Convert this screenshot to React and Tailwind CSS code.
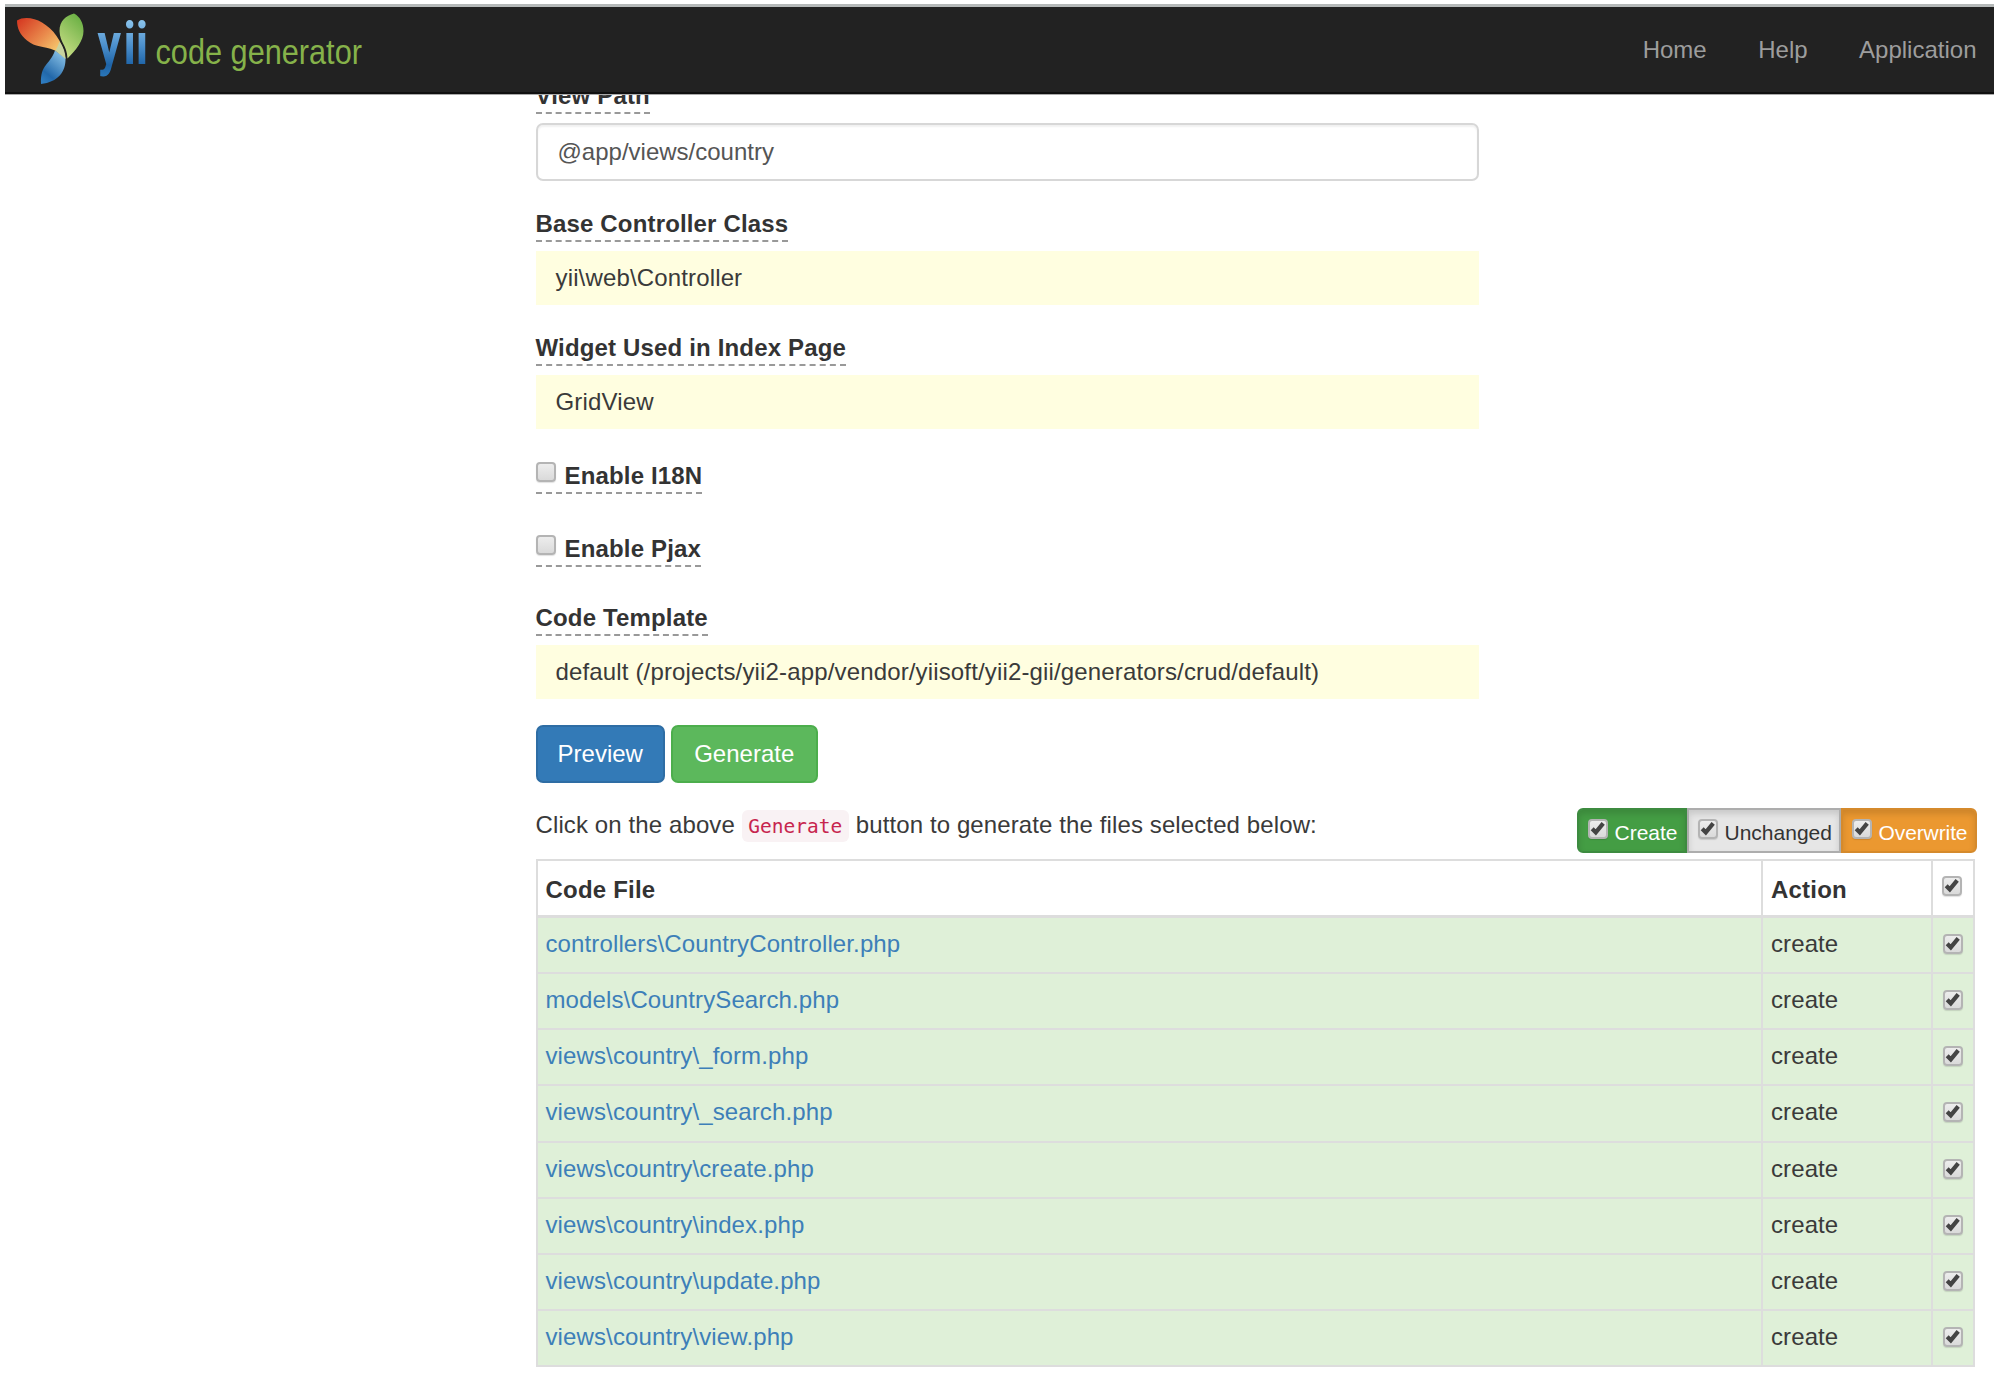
import React from "react";

const files = [
  "controllers\\CountryController.php",
  "models\\CountrySearch.php",
  "views\\country\\_form.php",
  "views\\country\\_search.php",
  "views\\country\\create.php",
  "views\\country\\index.php",
  "views\\country\\update.php",
  "views\\country\\view.php",
];

function Checkbox({ checked, className = "" }) {
  return (
    <span
      role="checkbox"
      aria-checked={!!checked}
      className={
        "inline-block h-5 w-5 shrink-0 rounded-[4px] border-2 border-[#b4b4b4] bg-linear-to-b from-[#ededed] to-[#dadada] shadow-[0_1px_1px_rgba(0,0,0,0.12)] " +
        className
      }
    >
      {checked && (
        <svg viewBox="0 0 16 16" className="block h-4 w-4" fill="none" stroke="#444" strokeWidth="4.2">
          <path d="M2.200 7.800 5.800 11.400 13.200 2.400" />
        </svg>
      )}
    </span>
  );
}

function Label({ children, className = "" }) {
  return (
    <div className={"flex h-8 " + className}>
      <span className="flex h-8 border-b-2 border-dashed border-[#999] font-bold leading-7 tracking-[0.16px] whitespace-pre">{children}</span>
    </div>
  );
}

function Sticky({ children }) {
  return (
    <div className="mt-[9px] h-[54px] w-[943px] bg-[#fffee0] pl-5 leading-[54px] tracking-[0.150px] text-[#3a3a3a]">{children}</div>
  );
}

function Logo() {
  return (
    <svg viewBox="0 0 380 85" className="h-[85px] w-[380px] overflow-visible">
      <defs>
        <linearGradient id="red" x1="0" y1="0.1" x2="1" y2="0.9">
          <stop offset="0" stopColor="#d63a22" />
          <stop offset="0.5" stopColor="#e98a4c" />
          <stop offset="1" stopColor="#fbe37c" />
        </linearGradient>
        <linearGradient id="green" x1="0.7" y1="0" x2="0.2" y2="1">
          <stop offset="0" stopColor="#6bb044" />
          <stop offset="1" stopColor="#cfe08a" />
        </linearGradient>
        <linearGradient id="blue" x1="0.8" y1="0" x2="0.2" y2="1">
          <stop offset="0" stopColor="#8cc4e8" />
          <stop offset="0.75" stopColor="#2268aa" />
          <stop offset="1" stopColor="#2e7cc0" />
        </linearGradient>
        <linearGradient id="word" gradientUnits="userSpaceOnUse" x1="0" y1="-42" x2="0" y2="12">
          <stop offset="0" stopColor="#86c0ea" />
          <stop offset="0.45" stopColor="#4a8ecb" />
          <stop offset="0.8" stopColor="#1e64a8" />
          <stop offset="1" stopColor="#2a76b8" />
        </linearGradient>
      </defs>
      <path d="M12 13.500C18 9.500 29 10.500 37 15.500C48 22 57 33 60.500 51L50 43.500C37 38 31 41 22 33.500C15 28 12 21 12 13.500Z" fill="url(#red)" />
      <path d="M69 6.500C75 9.500 78.500 16 78.500 24C78.500 34 71 43 62.500 51.500C62 38 55 36 54.500 24C54.500 14 61 8.500 69 6.500Z" fill="url(#green)" />
      <path d="M50 43.500L60.500 51C61 65 53 75 36 77C35 57 45 58 50 43.500Z" fill="url(#blue)" />
      <path d="M54.500 34.500C58.500 40 60.500 46 60.500 52C57 49 53 46 50.500 43.500C52.500 40 53.500 37 54.500 34.500Z" fill="#c8d3a0" />
      <text transform="translate(92.500 57) scale(0.79 1)" x="0 33 48.500" fill="url(#word)" fontFamily="Roboto, sans-serif" fontWeight="700" fontSize="59">
        yii
      </text>
      <text transform="translate(150.500 57) scale(0.877 1)" fill="#86b24a" fontFamily="Liberation Sans, Arial, sans-serif" fontSize="35">
        code generator
      </text>
    </svg>
  );
}

export default function App() {
  return (
    <div className="h-[1392px] w-[2012px] overflow-hidden bg-white pt-1 pl-[5px] font-['Liberation_Sans',Arial,sans-serif] text-[24px] text-[#333]">
      <nav className="relative z-10 flex h-[90px] w-[1989px] items-start justify-between border-t-[3px] border-b-2 border-t-[#b5b9b9] border-b-[#101010] bg-[#222] pr-[17.500px] shadow-[0_1px_0_#aaa]">
        <Logo />
        <div className="mt-[29px] flex gap-[51.500px] leading-7 text-[#9d9d9d]">
          <a>Home</a>
          <a>Help</a>
          <a>Application</a>
        </div>
      </nav>

      <main className="ml-[530.500px] w-[1440px]">
        <Label className="-mt-[12px]">View Path</Label>
        <div className="mt-[9px] h-[58px] w-[943px] rounded-[7px] border-2 border-[#d7d7d7] pl-5 leading-[54px] text-[#555] shadow-[inset_0_2px_2px_rgba(0,0,0,0.06)]">
          @app/views/country
        </div>
        <Label className="mt-[29px]">Base Controller Class</Label>
        <Sticky>yii\web\Controller</Sticky>
        <Label className="mt-[29px]">Widget Used in Index Page</Label>
        <Sticky>GridView</Sticky>
        <Label className="mt-[33px]">
          <Checkbox className="mr-[9px]" />
          Enable I18N
        </Label>
        <Label className="mt-[41px]">
          <Checkbox className="mr-[9px]" />
          Enable Pjax
        </Label>
        <Label className="mt-[37px]">Code Template</Label>
        <Sticky>default (/projects/yii2-app/vendor/yiisoft/yii2-gii/generators/crud/default)</Sticky>

        <div className="mt-[26px] flex gap-[6px] text-white">
          <button className="h-[58px] w-[129.500px] rounded-[7px] border-2 border-[#2e6da4] bg-[#337ab7]">Preview</button>
          <button className="h-[58px] w-[146.500px] rounded-[7px] border-2 border-[#4cae4c] bg-[#5cb85c]">Generate</button>
        </div>

        <div className="mt-[25px] flex h-[45px] items-start justify-between">
          <p className="mt-[3px] flex leading-7 tracking-[0.110px] whitespace-pre text-[#3a3a3a]">
            Click on the above{" "}
            <code className="-mt-px mr-[7px] h-8 w-[107px] rounded-[6px] bg-[#f9f2f4] text-center font-['DejaVu_Sans_Mono',monospace] text-[19.500px] leading-[34px] tracking-normal text-[#c7254e]">
              Generate
            </code>
            button to generate the files selected below:
          </p>
          <div className="-mr-[1.500px] flex h-[45px] text-[21px] leading-[46px] text-white">
            <div className="flex w-[110px] rounded-l-[6px] border-2 border-[#3d8b40] bg-[#449d44] pl-[8.500px] shadow-[inset_0_4px_6px_rgba(0,0,0,0.13)]">
              <Checkbox checked className="mt-[9px] mr-[7px]" />
              Create
            </div>
            <div className="flex w-[154px] border-2 border-[#adadad] bg-[#e6e6e6] pl-[8.500px] text-[#333] shadow-[inset_0_4px_6px_rgba(0,0,0,0.13)]">
              <Checkbox checked className="mt-[9px] mr-[7px]" />
              Unchanged
            </div>
            <div className="flex w-[136px] rounded-r-[6px] border-2 border-[#d58a2c] bg-[#eb9830] pl-[8.500px] tracking-[-0.1px] shadow-[inset_0_4px_6px_rgba(0,0,0,0.13)]">
              <Checkbox checked className="mt-[9px] mr-[7px]" />
              Overwrite
            </div>
          </div>
        </div>

        <div className="mt-[6px] w-[1439.500px] border-2 border-[#ddd]">
          <div className="flex h-[57px] border-b-[3px] border-[#ddd] font-bold leading-[57px]">
            <div className="flex-1 pl-2 tracking-[0.200px]">Code File</div>
            <div className="w-[170px] border-l-2 border-[#ddd] pl-[8.500px] tracking-[0.200px]">Action</div>
            <div className="flex w-[42.500px] border-l-2 border-[#ddd] pt-[15px] pl-[9px]">
              <Checkbox checked />
            </div>
          </div>
          {files.map((f) => (
            <div key={f} className="flex h-[56.130px] border-b-2 border-[#ddd] bg-[#dff0d8] leading-[52px] last:h-[54.500px] last:border-b-0">
              <a className="flex-1 pl-2 tracking-[0.120px] text-[#3d7fb8]">{f}</a>
              <div className="w-[170px] border-l-2 border-[#ddd] pl-[8.500px] tracking-[0.1px] text-[#3a3a3a]">create</div>
              <div className="flex w-[42.500px] items-start border-l-2 border-[#ddd] pt-[16px] pl-[10.500px]">
                <Checkbox checked />
              </div>
            </div>
          ))}
        </div>
      </main>
    </div>
  );
}
